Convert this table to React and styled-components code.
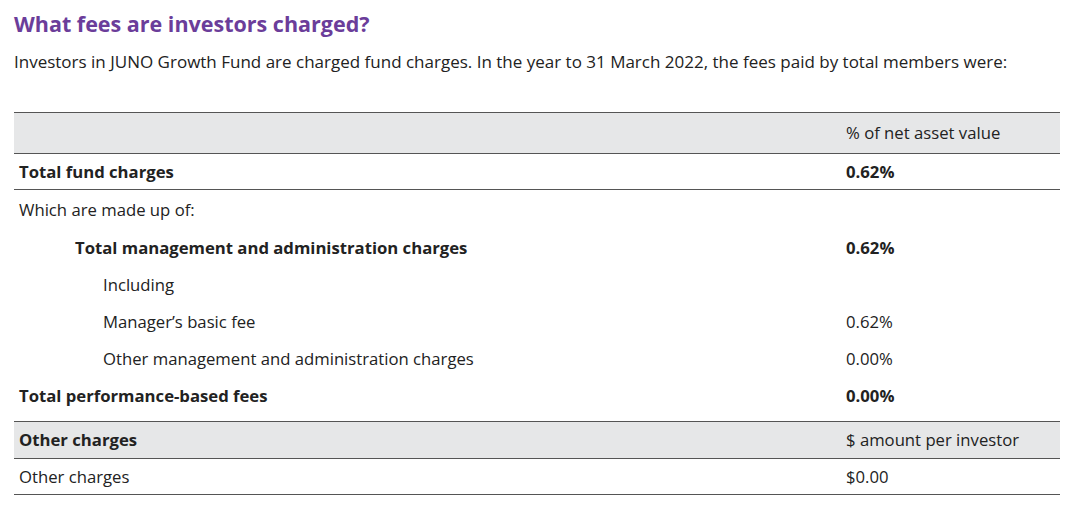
import React from "react";
import styled, { createGlobalStyle } from "styled-components";

const Global = createGlobalStyle`
  body {
    margin: 0;
    background: #fff;
    font-family: "Open Sans", "Liberation Sans", sans-serif;
    color: #222;
  }
`;

const Page = styled.div`
  padding: 8px 14px 0 14px;
`;

const Title = styled.h2`
  margin: 0;
  font-size: 21.5px;
  line-height: 32px;
  font-weight: 700;
  color: #6b3d9a;
`;

const Intro = styled.p`
  margin: 10px 0 0;
  font-size: 17px;
  line-height: 24px;
`;

const Table = styled.table`
  margin-top: 38px;
  width: 1046px;
  border-collapse: collapse;
  font-size: 16.7px;
  line-height: 24px;
`;

const Row = styled.tr`
  background: ${(p) => (p.$shaded ? "#e6e7e8" : "transparent")};
  border-top: ${(p) => (p.$top ? "1px solid #555" : "none")};
  border-bottom: ${(p) => (p.$bottom ? "1px solid #555" : "none")};
`;

const Cell = styled.td`
  height: ${(p) => p.$h || 37}px;
  padding: ${(p) => (p.$lift ? `0 5px ${p.$lift}px` : "0 5px")};
  padding-left: ${(p) => 5 + (p.$indent || 0)}px;
  font-weight: ${(p) => (p.$bold ? 700 : 400)};
  vertical-align: middle;
  box-sizing: border-box;
  &:first-child {
    width: 827px;
  }
`;

const rows = [
  { label: "Total fund charges", value: "0.62%", bold: true, bottom: true, h: 36, lift: 0 },
  { label: "Which are made up of:", value: "", h: 40 },
  { label: "Total management and administration charges", value: "0.62%", bold: true, indent: 56 },
  { label: "Including", value: "", indent: 84 },
  { label: "Manager\u2019s basic fee", value: "0.62%", indent: 84 },
  { label: "Other management and administration charges", value: "0.00%", indent: 84 },
  { label: "Total performance-based fees", value: "0.00%", bold: true, h: 44, lift: 6 },
];

export default function App() {
  return (
    <Page>
      <Global />
      <Title>What fees are investors charged?</Title>
      <Intro>
        Investors in JUNO Growth Fund are charged fund charges. In the year to 31 March 2022, the fees paid by total members were:
      </Intro>
      <Table>
        <tbody>
          <Row $shaded $top $bottom>
            <Cell $h={41} />
            <Cell $h={41}>% of net asset value</Cell>
          </Row>
          {rows.map((r) => (
            <Row key={r.label} $bottom={r.bottom}>
              <Cell $bold={r.bold} $indent={r.indent} $h={r.h} $lift={r.lift}>{r.label}</Cell>
              <Cell $bold={r.bold} $h={r.h} $lift={r.lift}>{r.value}</Cell>
            </Row>
          ))}
          <Row $shaded $top $bottom>
            <Cell $bold>Other charges</Cell>
            <Cell>$ amount per investor</Cell>
          </Row>
          <Row $bottom>
            <Cell $h={36}>Other charges</Cell>
            <Cell $h={36}>$0.00</Cell>
          </Row>
        </tbody>
      </Table>
    </Page>
  );
}
